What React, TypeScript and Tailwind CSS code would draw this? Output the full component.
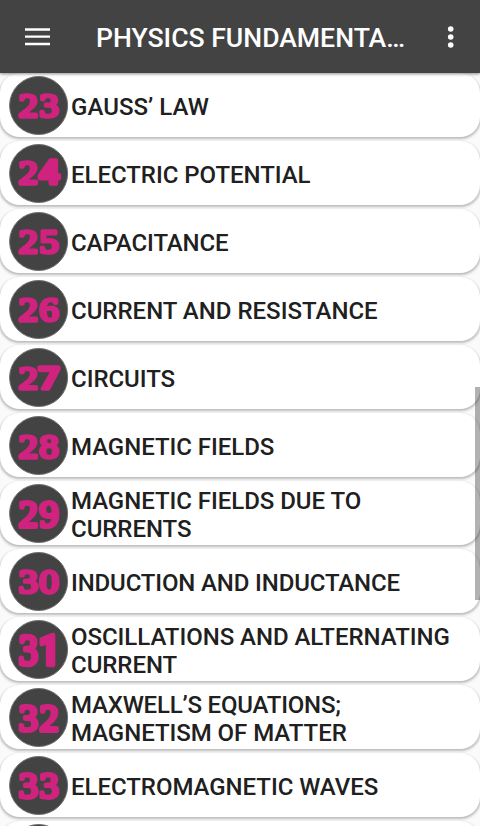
interface Chapter {
  num: string;
  lines: { text: string; tracking?: string }[];
  /** Top and bottom of the numerals inside the 60px badge. */
  top: number;
  bottom: number;
}

const CHAPTERS: Chapter[] = [
  { num: "23", lines: [{ text: "GAUSS’ LAW", tracking: "tracking-[0.05px]" }], top: 16.5, bottom: 43 },
  { num: "24", lines: [{ text: "ELECTRIC POTENTIAL" }], top: 16, bottom: 42.5 },
  { num: "25", lines: [{ text: "CAPACITANCE", tracking: "tracking-[-0.1px]" }], top: 16.5, bottom: 43.5 },
  { num: "26", lines: [{ text: "CURRENT AND RESISTANCE", tracking: "tracking-[0px]" }], top: 16.5, bottom: 43.5 },
  { num: "27", lines: [{ text: "CIRCUITS" }], top: 18, bottom: 43 },
  { num: "28", lines: [{ text: "MAGNETIC FIELDS" }], top: 17, bottom: 44 },
  { num: "29", lines: [{ text: "MAGNETIC FIELDS DUE TO" }, { text: "CURRENTS" }], top: 15, bottom: 45 },
  { num: "30", lines: [{ text: "INDUCTION AND INDUCTANCE", tracking: "tracking-[-0.14px]" }], top: 16.5, bottom: 43.5 },
  { num: "31", lines: [{ text: "OSCILLATIONS AND ALTERNATING" }, { text: "CURRENT" }], top: 14, bottom: 47 },
  {
    num: "32",
    lines: [{ text: "MAXWELL’S EQUATIONS;", tracking: "tracking-[-0.2px]" }, { text: "MAGNETISM OF MATTER" }],
    top: 15.5,
    bottom: 45.5,
  },
  { num: "33", lines: [{ text: "ELECTROMAGNETIC WAVES" }], top: 17, bottom: 44.5 },
];

const FIGURE_HEIGHT = 23;
const STROKE = 3.7;

/** 1, 4 and 7 have no serifs, the other figures end in round terminals. */
function Figure({ figure, x }: { figure: string; x: number }) {
  const plain = "147".includes(figure);
  return (
    <text
      x={x}
      y="0"
      className={
        plain
          ? "font-['Roboto',sans-serif] text-[33px] font-bold"
          : "font-['Liberation_Serif',serif] text-[34px] font-normal"
      }
    >
      {figure}
    </text>
  );
}

function Badge({ num = "", top = 0, bottom = 30 }: Partial<Omit<Chapter, "lines">>) {
  const scale = (bottom - top - STROKE) / FIGURE_HEIGHT;
  return (
    <svg viewBox="0 0 60 60" className="size-[60px] shrink-0" aria-hidden="true">
      <circle cx="29.6" cy="29.5" r="29" fill="#434343" stroke="#6c6c6c" strokeWidth="1" />
      {num ? (
        <g
          transform={`translate(0 ${bottom - STROKE / 2 - 0.5}) scale(1.14 ${scale})`}
          className="blur-[0.4px]"
          fill="#d0237f"
          stroke="#d0237f"
          strokeWidth={STROKE}
          strokeLinejoin="round"
          textAnchor="middle"
        >
          <Figure figure={num[0]} x={17.1} />
          <Figure figure={num[1]} x={35.3} />
        </g>
      ) : null}
    </svg>
  );
}

function ChapterCard({ chapter }: { chapter?: Chapter }) {
  return (
    <li className="flex h-16 shrink-0 items-center rounded-[20px] bg-white pt-px pl-[9px] shadow-[0_1.5px_2.5px_0.5px_rgba(0,0,0,0.25)]">
      <Badge num={chapter?.num} top={chapter?.top} bottom={chapter?.bottom} />
      <div className="ml-0.5 pt-0.5 text-[24px] leading-7 font-medium whitespace-nowrap text-[#202020]">
        {chapter?.lines.map((line) => (
          <p key={line.text} className={line.tracking ?? "tracking-[-0.04px]"}>
            {line.text}
          </p>
        ))}
      </div>
    </li>
  );
}

function AppBar() {
  return (
    <header className="relative z-10 flex h-[73px] shrink-0 items-center bg-[#434343] text-white shadow-[0_1px_3px_rgba(0,0,0,0.45)]">
      <button type="button" aria-label="Menu" className="ml-[25px] w-[25px]">
        <svg viewBox="0 0 25 18" className="h-[18px] w-[25px]" stroke="#fff" strokeWidth="2.3">
          <path d="M0 1.5H25M0 8.6H25M0 16H25" />
        </svg>
      </button>
      <h1 className="ml-[46px] w-[320px] pt-0.5 text-[26.6px] leading-8 font-medium whitespace-nowrap">
        PHYSICS FUNDAMENTA…
      </h1>
      <button type="button" aria-label="More" className="ml-[31px]">
        <svg viewBox="0 0 7 22" className="h-[22px] w-[7px]" fill="#fff">
          <circle cx="3.7" cy="3" r="2.8" />
          <circle cx="3.7" cy="11" r="2.8" />
          <circle cx="3.7" cy="19" r="2.8" />
        </svg>
      </button>
    </header>
  );
}

export default function App() {
  return (
    <div className="relative flex h-[826px] w-[480px] flex-col overflow-hidden bg-[#fafafa] font-['Roboto',sans-serif]">
      <AppBar />
      <ul className="flex min-h-0 flex-1 flex-col gap-1 overflow-hidden">
        {CHAPTERS.map((chapter) => (
          <ChapterCard key={chapter.num} chapter={chapter} />
        ))}
        {/* Next row, only its upper edge scrolled into view */}
        <ChapterCard />
      </ul>
      {/* Scroll thumb, laid over the cards */}
      <div className="absolute top-[387px] right-0 h-[213px] w-[5.5px] bg-black/30" />
    </div>
  );
}
